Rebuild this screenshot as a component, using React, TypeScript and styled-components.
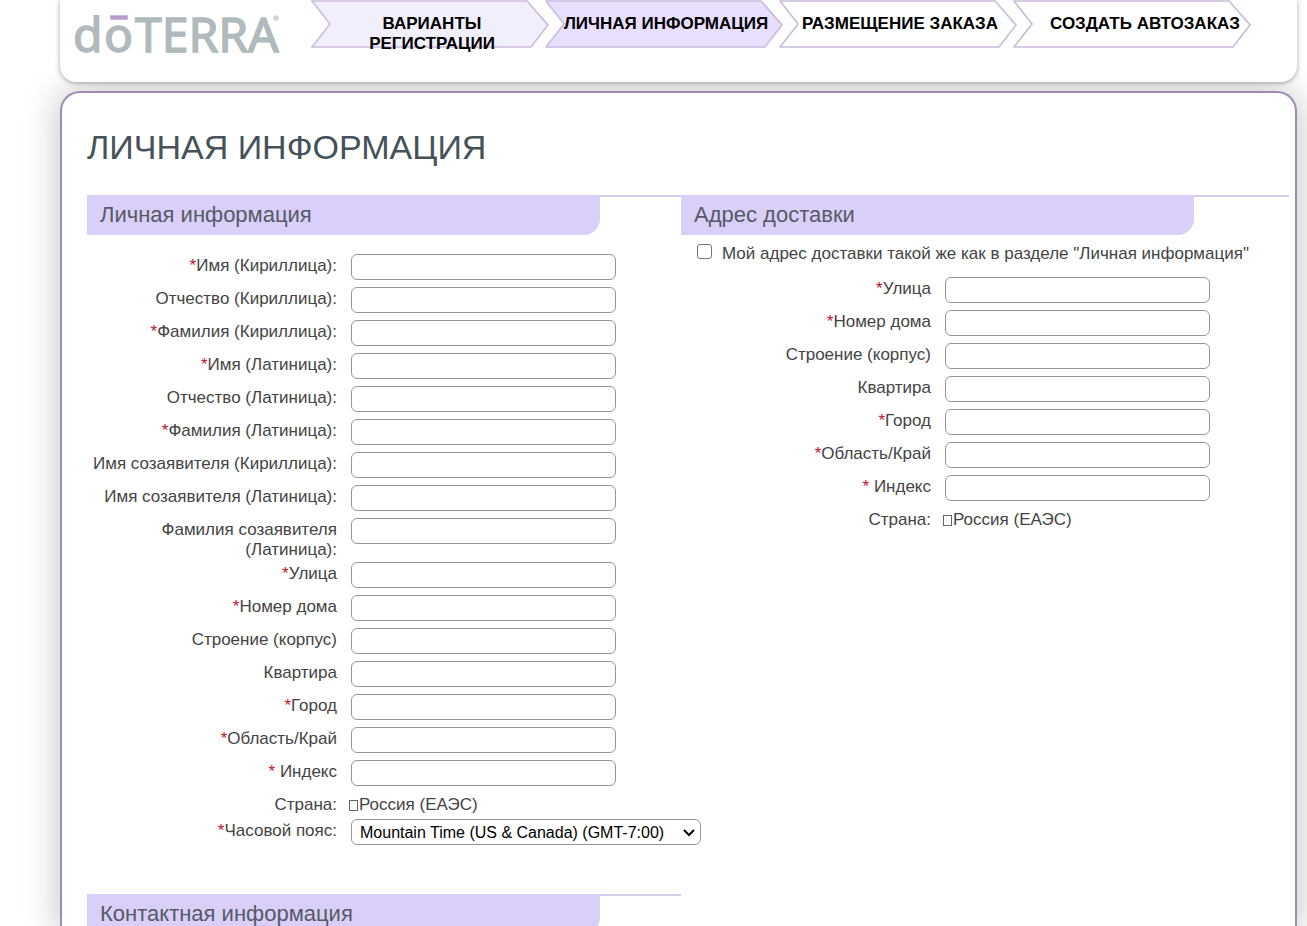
import React, { useId } from "react";
import styled, { createGlobalStyle } from "styled-components";

const GlobalStyle = createGlobalStyle`
  * { box-sizing: border-box; }
  body {
    margin: 0;
    background: #fff;
    color: #444;
    font-family: "Liberation Sans", Arial, sans-serif;
    font-size: 17px;
    line-height: 20px;
  }
`;

const Page = styled.div`
  height: 100vh;
  overflow: hidden;
  padding: 0 10px 0 60px;
  display: flex;
  flex-direction: column;
  gap: 9px;
`;

const Header = styled.header`
  position: relative;
  z-index: 1;
  flex: none;
  height: 82px;
  padding-left: 10px;
  display: flex;
  align-items: flex-start;
  background: #fff;
  border-radius: 0 0 16px 16px;
  box-shadow: 0 1px 5px rgba(0, 0, 0, 0.35);
`;

const Logo = styled.svg`
  display: block;
  flex: none;
  width: 226px;
  height: 72px;
  margin-right: 15px;
  font-family: "Noto Sans", sans-serif;
  font-size: 48px;
  fill: #b0b9bb;
  stroke: #b0b9bb;
  stroke-width: 1.4;
`;

const Steps = styled.ol`
  display: flex;
  margin: 0;
  padding: 0;
  list-style: none;
`;

const Step = styled.li`
  position: relative;
  width: 234px;
  height: 48px;
`;

const StepShape = styled.svg<{ $fill: string }>`
  position: absolute;
  top: 0;
  left: 0;
  width: 238px;
  height: 49px;
  fill: ${(p) => p.$fill};
  stroke: #cdbbdd;
  stroke-width: 1.7;
`;

const StepLink = styled.a<{ $indent?: boolean }>`
  position: relative;
  display: block;
  padding: 14px 0 0 ${(p) => (p.$indent ? "30px" : "8px")};
  color: #000;
  font-weight: bold;
  text-align: center;
  text-decoration: none;
`;

const Panel = styled.main`
  flex: 1;
  padding: 0 6px 0 25px;
  background: #fff;
  border: 2px solid #a18bb3;
  border-bottom: 0;
  border-radius: 20px 20px 0 0;
  box-shadow: 0 0 36px rgba(0, 8, 4, 0.26);
`;

const Title = styled.h1`
  margin: 0;
  padding: 33px 0 27px;
  color: #465259;
  font-size: 34px;
  font-weight: normal;
  line-height: 42px;
`;

const Columns = styled.div`
  display: grid;
  grid-template-columns: minmax(0, 594fr) minmax(0, 608fr);
  align-items: start;
`;

const Section = styled.section`
  border-top: 2px solid #d6cdea;
`;

const SectionTitle = styled.h2`
  width: 513px;
  margin: -2px 0 0;
  padding: 0 13px;
  background: #d9cff8;
  border-radius: 0 0 16px 0;
  color: #555a66;
  font-size: 22px;
  font-weight: normal;
  line-height: 40px;
`;

const Rows = styled.div<{ $top: number; $bottom?: number }>`
  padding: ${(p) => p.$top}px 0 ${(p) => p.$bottom ?? 0}px;
`;

const Row = styled.div<{ $compact?: boolean }>`
  display: grid;
  grid-template-columns: 250px 1fr;
  column-gap: 14px;
  align-items: start;
  min-height: ${(p) => (p.$compact ? 26 : 33)}px;
`;

const Label = styled.label`
  padding: 2px 0;
  text-align: right;
`;

const Star = styled.span`
  color: #c8102e;
`;

const TextInput = styled.input`
  width: 265px;
  height: 26px;
  padding: 0 8px;
  background: #fff;
  border: 1px solid #96949f;
  border-radius: 6px;
  font: inherit;
`;

const SelectWrap = styled.div`
  position: relative;
  width: 350px;
  height: 26px;
`;

const Select = styled.select`
  appearance: none;
  width: 100%;
  height: 100%;
  padding: 0 28px 0 8px;
  background: #fff;
  border: 1px solid #96949f;
  border-radius: 6px;
  color: #000;
  font-family: inherit;
  font-size: 16px;
`;

const Chevron = styled.svg`
  position: absolute;
  top: 9px;
  right: 6px;
  width: 12px;
  height: 9px;
  fill: none;
  stroke: #000;
  stroke-width: 2;
  pointer-events: none;
`;

const Country = styled.output`
  display: flex;
  align-items: center;
  gap: 1px;
  margin-left: -2px;
  padding: 2px 0;
`;

const MissingGlyph = styled.span`
  width: 9px;
  height: 11px;
  border: 1px solid #666;
`;

const SameAddress = styled.label`
  display: flex;
  gap: 10px;
  padding: 9px 0 0 16px;
  white-space: nowrap;
`;

const Checkbox = styled.input`
  appearance: none;
  width: 15px;
  height: 15px;
  margin: 0;
  background: #fff;
  border: 1px solid #767676;
  border-radius: 3px;
  &:checked { background: #7a5ca0; }
`;

type FieldProps = { label: string; required?: boolean };

function Field({ label, required }: FieldProps) {
  const id = useId();
  return (
    <Row>
      <Label htmlFor={id}>
        {required && <Star>*</Star>}
        {label}
      </Label>
      <TextInput id={id} type="text" />
    </Row>
  );
}

function CountryRow() {
  const id = useId();
  return (
    <Row $compact>
      <Label htmlFor={id}>Страна:</Label>
      <Country id={id}>
        <MissingGlyph />
        Россия (ЕАЭС)
      </Country>
    </Row>
  );
}

function TimeZoneRow() {
  const id = useId();
  return (
    <Row>
      <Label htmlFor={id}>
        <Star>*</Star>Часовой пояс:
      </Label>
      <SelectWrap>
        <Select id={id}>
          <option>Mountain Time (US &amp; Canada) (GMT-7:00)</option>
        </Select>
        <Chevron viewBox="0 0 12 9">
          <path d="M1 2 L6 7 L11 2" />
        </Chevron>
      </SelectWrap>
    </Row>
  );
}

const steps = [
  { text: "ВАРИАНТЫ РЕГИСТРАЦИИ", fill: "#f2effd" },
  { text: "ЛИЧНАЯ ИНФОРМАЦИЯ", fill: "#e7dffd" },
  { text: "РАЗМЕЩЕНИЕ ЗАКАЗА", fill: "#fff" },
  { text: "СОЗДАТЬ АВТОЗАКАЗ", fill: "#fff", indent: true },
];

const nameFields: FieldProps[] = [
  { label: "Имя (Кириллица):", required: true },
  { label: "Отчество (Кириллица):" },
  { label: "Фамилия (Кириллица):", required: true },
  { label: "Имя (Латиница):", required: true },
  { label: "Отчество (Латиница):" },
  { label: "Фамилия (Латиница):", required: true },
  { label: "Имя созаявителя (Кириллица):" },
  { label: "Имя созаявителя (Латиница):" },
  { label: "Фамилия созаявителя (Латиница):" },
];

const addressFields: FieldProps[] = [
  { label: "Улица", required: true },
  { label: "Номер дома", required: true },
  { label: "Строение (корпус)" },
  { label: "Квартира" },
  { label: "Город", required: true },
  { label: "Область/Край", required: true },
  { label: " Индекс", required: true },
];

export default function App() {
  return (
    <>
      <GlobalStyle />
      <Page>
        <Header>
          <Logo viewBox="0 0 226 72" role="img" aria-label="dōTERRA">
            <text x="3" y="52">d</text>
            <text x="34" y="52">o</text>
            <text x="65" y="52">TERRA</text>
            <rect x="41" y="16" width="16" height="3" fill="#b79cc9" stroke="#b79cc9" />
            <circle cx="206" cy="18" r="2" fill="#ccd2d3" stroke="#ccd2d3" />
          </Logo>
          <Steps>
            {steps.map((s) => (
              <Step key={s.text}>
                <StepShape $fill={s.fill} viewBox="0 0 238 49">
                  <path d="M1 1 H216 L237 25 L220 47 H1 L19 24 Z" />
                </StepShape>
                <StepLink href="#" $indent={s.indent}>{s.text}</StepLink>
              </Step>
            ))}
          </Steps>
        </Header>
        <Panel>
          <Title>ЛИЧНАЯ ИНФОРМАЦИЯ</Title>
          <Columns>
            <div>
              <Section>
                <SectionTitle>Личная информация</SectionTitle>
                <Rows $top={19} $bottom={42}>
                  {nameFields.map((f) => <Field key={f.label} {...f} />)}
                  {addressFields.map((f) => <Field key={f.label} {...f} />)}
                  <CountryRow />
                  <TimeZoneRow />
                </Rows>
              </Section>
              <Section>
                <SectionTitle>Контактная информация</SectionTitle>
              </Section>
            </div>
            <Section>
              <SectionTitle>Адрес доставки</SectionTitle>
              <SameAddress>
                <Checkbox type="checkbox" />
                Мой адрес доставки такой же как в разделе "Личная информация"
              </SameAddress>
              <Rows $top={13}>
                {addressFields.map((f) => <Field key={f.label} {...f} />)}
                <CountryRow />
              </Rows>
            </Section>
          </Columns>
        </Panel>
      </Page>
    </>
  );
}
